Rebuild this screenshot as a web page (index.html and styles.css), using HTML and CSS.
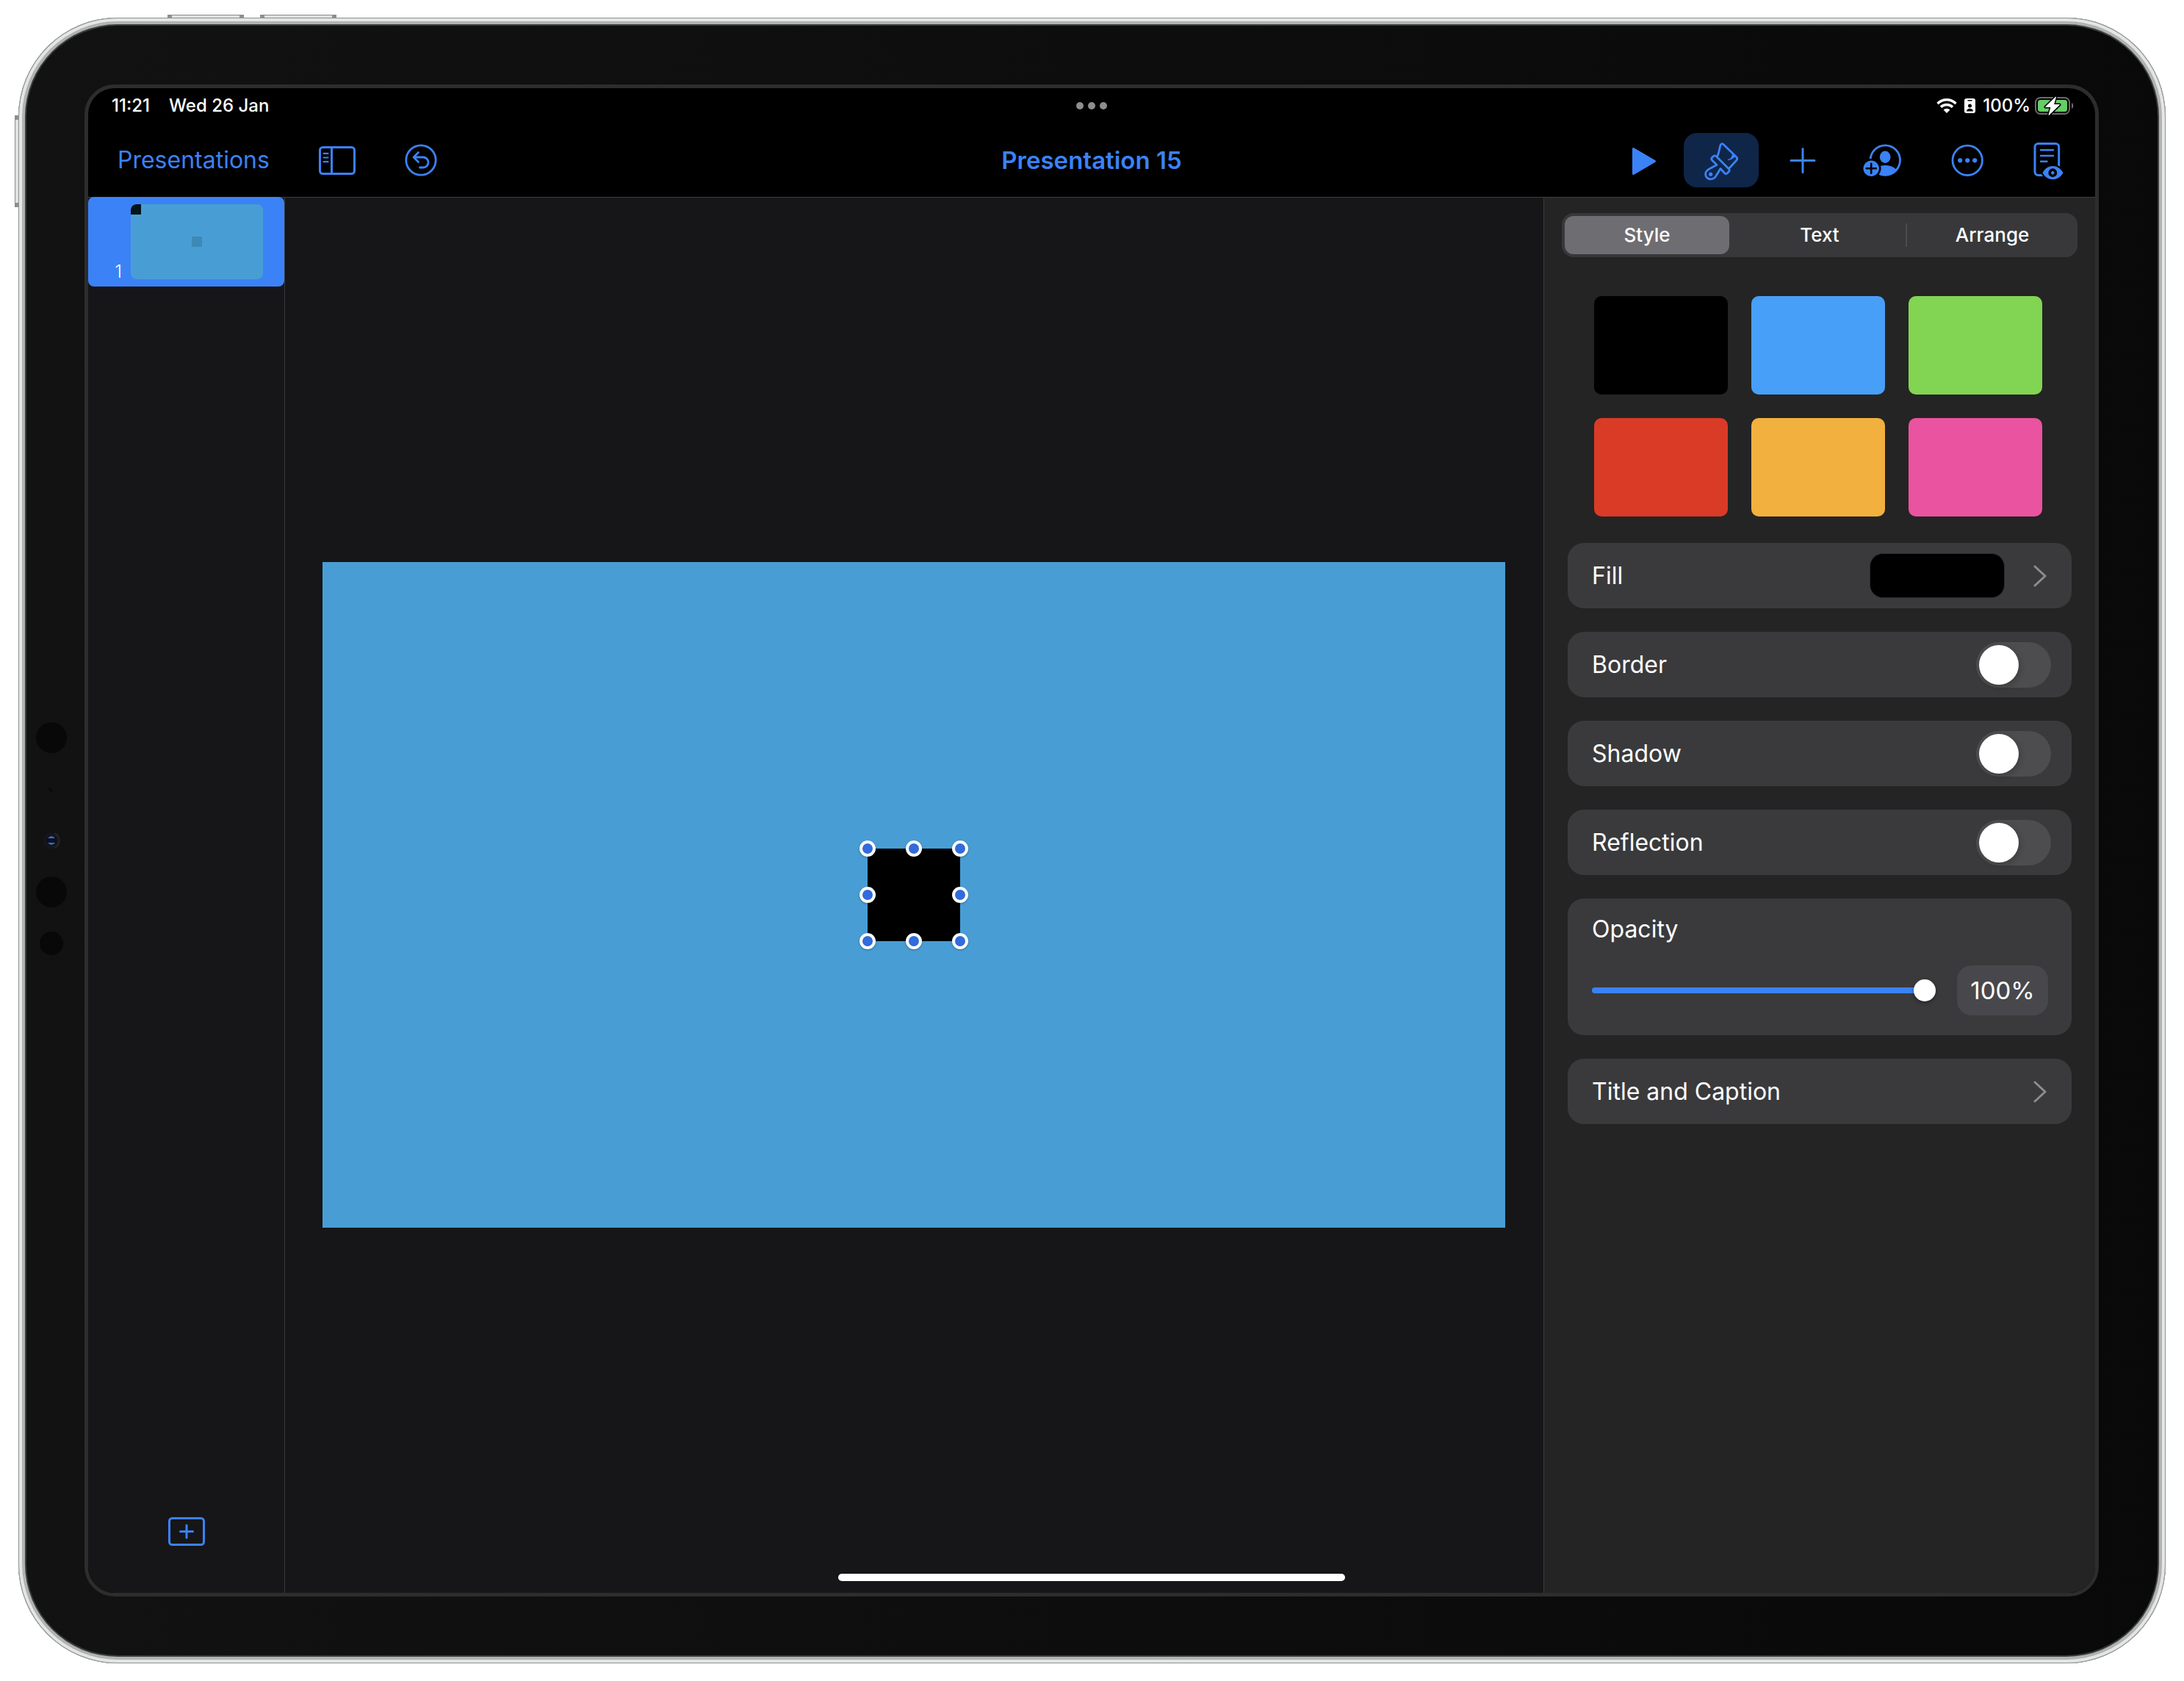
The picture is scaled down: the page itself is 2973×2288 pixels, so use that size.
FILE: index.html
```html
<!DOCTYPE html>
<html lang="en">
<head>
<meta charset="utf-8">
<meta name="viewport" content="width=device-width, initial-scale=1">
<title>Presentation 15</title>
<link rel="stylesheet" href="styles.css">
</head>
<body>
<div class="device">
  <span class="hw hw-top hw-up"></span>
  <span class="hw hw-top hw-down"></span>
  <span class="hw hw-side"></span>
  <div class="sensors">
    <span class="slot"><i class="sensor large"></i></span>
    <span class="slot"><i class="sensor mic"></i></span>
    <span class="slot">
      <svg width="26" height="26" viewBox="0 0 26 26"><circle cx="13" cy="13" r="11" fill="#15161a"/><path d="M17 3a11 11 0 0 1 0 20" fill="none" stroke="#222" stroke-width="3"/><circle cx="13" cy="13" r="7" fill="#0c1024"/><path d="M8 10q5-6 10 0zM8 16q5 6 10 0z" fill="#3c6cb4"/></svg>
    </span>
    <span class="slot"><i class="sensor large"></i></span>
    <span class="slot"><i class="sensor small"></i></span>
  </div>

  <div class="screen">
    <div class="status">
      <div class="status-left"><span>11:21</span><span>Wed 26 Jan</span></div>
      <div class="dots"><i></i><i></i><i></i></div>
      <div class="status-right">
        <svg class="wifi" width="28" height="20" viewBox="0 0 28 20"><g fill="none" stroke="#fff" stroke-width="3.4"><path d="M1.5 7a17.6 17.6 0 0 1 25 0"/><path d="M6 11.8a11.4 11.4 0 0 1 16 0"/></g><path d="M14 20l-4.400-4.600a6.400 6.400 0 0 1 8.800 0z" fill="#fff"/></svg>
        <svg class="badge" width="15" height="20" viewBox="0 0 15 20"><rect width="15" height="20" rx="3" fill="#fff"/><path d="M4.500 2.700h6" stroke="#000" stroke-width="1.400"/><circle cx="7.500" cy="10" r="2.500"/><path d="M3 17.500c0-5 9-5 9 0z"/></svg>
        <span>100%</span>
        <svg class="battery" width="54" height="26" viewBox="0 0 54 26"><rect x="1" y="2" width="46" height="22" rx="6.500" fill="none" stroke="#6b6b6d" stroke-width="2"/><rect x="4" y="5" width="40" height="16" rx="3.500" fill="#65cd66"/><path d="M50 9c3 1 3 7 0 8z" fill="#6b6b6d"/><path d="M28.500 1L14.500 14.500h7.500L19 25.500 33.500 11.500h-8z" fill="#000" stroke="#000" stroke-width="4" stroke-linejoin="round"/><path d="M28.500 1L14.500 14.500h7.500L19 25.500 33.500 11.500h-8z" fill="#fff" stroke="#fff" stroke-width="1" stroke-linejoin="round"/></svg>
      </div>
    </div>

    <header class="toolbar">
      <div class="tools-left">
        <a class="back" href="#">Presentations</a>
        <button class="icon-btn" type="button" aria-label="View options">
          <svg width="50" height="39" viewBox="0 0 50 39" fill="none" stroke="currentColor" stroke-width="3"><rect x="1.500" y="1.500" width="47" height="36" rx="4"/><path d="M17.500 2v35"/><path d="M6.500 9.800h6M6.500 15.500h6M6.500 21.200h6" stroke-width="2.200" stroke-linecap="round"/></svg>
        </button>
        <button class="icon-btn" type="button" aria-label="Undo">
          <svg width="44" height="44" viewBox="0 0 44 44" fill="none" stroke="currentColor" stroke-width="2.800" stroke-linecap="round" stroke-linejoin="round"><circle cx="22" cy="22" r="20.200"/><path d="M18.500 11.500L12 18l6.500 6.500M12.500 18H25a7 7 0 0 1 0 14h-4.500"/></svg>
        </button>
      </div>
      <h1 class="title">Presentation 15</h1>
      <div class="tools-right">
        <button class="icon-btn" type="button" aria-label="Play">
          <svg width="64" height="64" viewBox="0 0 64 64"><path d="M17.500 16.500v34L46.500 33.500z" fill="currentColor" stroke="currentColor" stroke-width="3" stroke-linejoin="round"/></svg>
        </button>
        <button class="icon-btn format" type="button" aria-label="Format" aria-pressed="true">
          <svg width="64" height="64" viewBox="0 0 64 64" fill="none" stroke="currentColor" stroke-width="2.800" stroke-linejoin="round"><path d="M26 38.500L19.500 32Q18 30 19.500 28.500L21.500 26.500Q23.500 25 25.500 27L42.500 44Q44 46 42.500 47.500L40 50Q38 51.500 36.500 49.500L31 43.500C29 47 27 50 25.500 52.500C23 58 17 59 13.500 56.500C10 54 9.500 48.500 13.500 45.500C17 43 21.500 41 26 38.500Z"/><path d="M26.500 27C29.500 22 29.500 15 31 11.500Q32.500 8.500 35 10.500L53 28Q54.500 30 53 32L42.500 43.500"/><path d="M47.500 22.500C47.500 27 45 31 41 31.500C45 31.500 49 29 51.500 26.500Z" fill="currentColor" stroke-width="1"/><circle cx="17.700" cy="51.200" r="2.600" fill="currentColor" stroke="none"/></svg>
        </button>
        <button class="icon-btn wide" type="button" aria-label="Insert">
          <svg width="64" height="64" viewBox="0 0 64 64" fill="none" stroke="currentColor" stroke-width="3" stroke-linecap="round"><path d="M32 16.500v32M16 32.500h32"/></svg>
        </button>
        <button class="icon-btn wide" type="button" aria-label="Collaborate">
          <svg width="64" height="64" viewBox="0 0 64 64"><clipPath id="disc"><circle cx="33.300" cy="32" r="21.500"/></clipPath><circle cx="33.300" cy="32" r="20.200" fill="none" stroke="currentColor" stroke-width="2.800"/><ellipse cx="33.200" cy="27.700" rx="7.300" ry="8.200" fill="currentColor"/><ellipse cx="33.300" cy="53" rx="18.500" ry="14" fill="currentColor" clip-path="url(#disc)"/><circle cx="14.200" cy="43.300" r="13.300"/><circle cx="14.200" cy="43.300" r="10.700" fill="currentColor"/><path d="M14.200 36.800v13M7.700 43.300h13" stroke="#000" stroke-width="2.600" stroke-linecap="round"/></svg>
        </button>
        <button class="icon-btn wide" type="button" aria-label="More">
          <svg width="64" height="64" viewBox="0 0 64 64"><circle cx="34.200" cy="32.300" r="20.200" fill="none" stroke="currentColor" stroke-width="2.800"/><g fill="currentColor"><circle cx="24.200" cy="32.300" r="3.100"/><circle cx="34.200" cy="32.300" r="3.100"/><circle cx="44.200" cy="32.300" r="3.100"/></g></svg>
        </button>
        <button class="icon-btn wide" type="button" aria-label="Reading view">
          <svg width="64" height="64" viewBox="0 0 64 64" fill="none" stroke="currentColor"><rect x="15" y="9.500" width="32.700" height="43" rx="4.500" stroke-width="3"/><path d="M23 18.300h17M23 26h17M23 33.700h8.500" stroke-width="2.400" stroke-linecap="round"/><path d="M25.500 49.200C32 37 46.500 37 53.500 49.200C46.500 61.200 32 61.200 25.500 49.200Z" fill="currentColor" stroke="#000" stroke-width="4.500" paint-order="stroke"/><circle cx="39.300" cy="49.200" r="4.100" fill="currentColor" stroke="#000" stroke-width="3.600"/></svg>
        </button>
      </div>
    </header>

    <main class="workspace">
      <nav class="navigator" aria-label="Slides">
        <button class="slide-item" type="button" aria-label="Slide 1">
          <span class="slide-number">1</span>
          <svg class="thumb" width="180" height="102" viewBox="0 0 180 102"><rect width="180" height="102" fill="#489ed4"/><rect width="14" height="14" fill="#04141a"/><rect x="83" y="44" width="14" height="14" fill="#3d89b6"/></svg>
        </button>
        <button class="icon-btn add-slide" type="button" aria-label="Add slide">
          <svg width="50" height="39" viewBox="0 0 50 39" fill="none" stroke="currentColor" stroke-width="3" stroke-linecap="round"><rect x="1.500" y="1.500" width="47" height="36" rx="4"/><path d="M25 11v17M16.500 19.500h17"/></svg>
        </button>
      </nav>

      <section class="canvas" aria-label="Slide">
        <div class="slide">
          <div class="shape">
            <i class="handle nw"></i><i class="handle n"></i><i class="handle ne"></i>
            <i class="handle w"></i><i class="handle e"></i>
            <i class="handle sw"></i><i class="handle s"></i><i class="handle se"></i>
          </div>
        </div>
      </section>

      <aside class="inspector">
        <div class="tabs" role="tablist">
          <button type="button" role="tab" aria-selected="true">Style</button>
          <button type="button" role="tab" aria-selected="false">Text</button>
          <button type="button" role="tab" aria-selected="false" class="divided">Arrange</button>
        </div>
        <div class="presets">
          <button type="button" class="preset black" aria-label="Black"></button>
          <button type="button" class="preset blue" aria-label="Blue"></button>
          <button type="button" class="preset green" aria-label="Green"></button>
          <button type="button" class="preset red" aria-label="Red"></button>
          <button type="button" class="preset yellow" aria-label="Yellow"></button>
          <button type="button" class="preset pink" aria-label="Pink"></button>
        </div>
        <div class="cards">
          <button class="card link" type="button"><span class="label">Fill</span><span class="fill-swatch"></span><svg width="18" height="30" viewBox="0 0 18 30" fill="none" stroke="#8d8d91" stroke-width="3" stroke-linecap="round" stroke-linejoin="round"><path d="M2 2l14 13L2 28"/></svg></button>
          <div class="card"><label class="label" for="border">Border</label><input class="switch" type="checkbox" role="switch" id="border"></div>
          <div class="card"><label class="label" for="shadow">Shadow</label><input class="switch" type="checkbox" role="switch" id="shadow"></div>
          <div class="card"><label class="label" for="reflection">Reflection</label><input class="switch" type="checkbox" role="switch" id="reflection"></div>
          <div class="card opacity">
            <label class="label" for="opacity">Opacity</label>
            <div class="opacity-row">
              <input class="slider" type="range" id="opacity" min="0" max="100" value="100">
              <input class="amount" type="text" value="100%" aria-label="Opacity value">
            </div>
          </div>
          <button class="card link" type="button"><span class="label">Title and Caption</span><svg width="18" height="30" viewBox="0 0 18 30" fill="none" stroke="#8d8d91" stroke-width="3" stroke-linecap="round" stroke-linejoin="round"><path d="M2 2l14 13L2 28"/></svg></button>
        </div>
      </aside>
    </main>
    <span class="home-indicator"></span>
  </div>
</div>
</body>
</html>
```
FILE: styles.css
```css
:root {
  --accent: #3b82f7;
  --line: #414143;
  --card: #3a3a3c;
}

* { box-sizing: border-box; }

body {
  margin: 0;
  min-height: 100vh;
  padding: 24px 25px;
  display: flex;
  background: #fff;
  color: #fff;
  font-family: Inter, "Liberation Sans", sans-serif;
  font-size: 32px;
  line-height: 44px;
}

button, input { font: inherit; color: inherit; border: 0; margin: 0; padding: 0; background: none; }
svg { display: block; flex: none; }

/* Hardware */
.device {
  position: relative;
  flex: 1;
  min-width: 0;
  display: flex;
  padding: 91px 91px 91px 0;
  border-radius: 135px;
  background: linear-gradient(to right, #121212, #090909);
  box-shadow: inset 0 0 0 1px #8f9291, inset 0 0 0 5px #e4e6e4, inset 0 0 0 9px #b0b3b1, inset 0 0 0 11px #3a3c3c;
}
.hw { position: absolute; background: #dfe2e0; border: 1px solid #8b8e8c; }
.hw-top { top: -4px; width: 104px; height: 4px; border-bottom: 0; border-left-width: 6px; border-right-width: 6px; }
.hw-up { left: 203px; }
.hw-down { left: 329px; }
.hw-side { left: -5px; top: 133px; width: 5px; height: 125px; border-right: 0; border-top-width: 6px; border-bottom-width: 6px; }

.sensors { width: 90px; flex: none; display: flex; flex-direction: column; align-items: center; justify-content: center; }
.slot { height: 70px; display: flex; align-items: center; }
.sensor { border-radius: 50%; background: #080808; }
.large { width: 42px; height: 42px; }
.small { width: 32px; height: 32px; }
.mic { width: 8px; height: 8px; background: repeating-linear-gradient(45deg, #060606 0 1px, #181818 1px 2px); }

.screen {
  position: relative;
  flex: 1;
  min-width: 0;
  display: flex;
  flex-direction: column;
  overflow: hidden;
  border: 5px solid #2d2d2d;
  border-radius: 41px;
  background: #000;
}

/* Status bar */
.status {
  height: 48px;
  display: grid;
  grid-template-columns: 1fr auto 1fr;
  align-items: center;
  padding: 0 28px;
  font-size: 24px;
  line-height: 32px;
  font-weight: 500;
}
.status-left { display: flex; gap: 26px; padding-left: 4px; }
.dots { display: flex; gap: 6px; }
.dots i { width: 10px; height: 10px; border-radius: 50%; background: #8e8e8f; }
.status-right { display: flex; align-items: center; justify-content: flex-end; }
.badge { margin: 0 10px; }
.battery { margin-left: 6px; }

/* Toolbar */
.toolbar { height: 100px; display: grid; grid-template-columns: 1fr auto 1fr; align-items: center; color: var(--accent); }
.tools-left, .tools-right { display: flex; align-items: center; }
.tools-left { padding-left: 40px; gap: 67px; }
.tools-right { justify-content: flex-end; padding-right: 10px; }
.back { color: inherit; text-decoration: none; }
.title { margin: 0; font-size: 33px; line-height: 44px; font-weight: 600; }
.icon-btn { display: flex; align-items: center; justify-content: center; color: var(--accent); }
.wide { width: 111px; }
.format { width: 102px; height: 74px; margin: 0 4px 0 22px; border-radius: 18px; background: #0f2649; }

/* Workspace */
.workspace { flex: 1; display: flex; background: #161618; }
.workspace > * { box-shadow: inset 0 1px var(--line); }
.navigator { width: 268px; flex: none; display: flex; flex-direction: column; justify-content: space-between; border-right: 1px solid #39393b; }
.slide-item { height: 122px; display: flex; align-items: center; justify-content: flex-end; gap: 12px; padding-right: 29px; border-radius: 8px; background: var(--accent); }
.slide-number { align-self: flex-end; font-size: 24px; line-height: 32px; font-weight: 300; padding-bottom: 4px; }
.thumb { border-radius: 8px; }
.add-slide { align-self: center; margin-bottom: 64px; }

.canvas { flex: 1; min-width: 0; display: flex; align-items: center; padding: 0 52px 0 51px; }
.slide { flex: 1; aspect-ratio: 16 / 9; display: flex; align-items: center; justify-content: center; background: #489ed4; }
.shape { position: relative; width: 126px; height: 126px; background: #000; }
.handle { position: absolute; width: 22px; height: 22px; margin: -11px; border: 4px solid #fff; border-radius: 50%; background: #316bdc; box-shadow: 0 1px 3px rgba(0, 0, 0, .3); }
.nw, .n, .ne { top: 0; }
.w, .e { top: 50%; }
.sw, .s, .se { top: 100%; }
.nw, .w, .sw { left: 0; }
.n, .s { left: 50%; }
.ne, .e, .se { left: 100%; }

/* Inspector */
.inspector { width: 751px; flex: none; padding: 22px 24px; border-left: 1px solid #39393b; background: #242424; }
.tabs { height: 60px; display: grid; grid-template-columns: repeat(3, 1fr); gap: 11px; padding: 4px; border-radius: 16px; background: #38383a; }
.tabs button { position: relative; border-radius: 12px; font-size: 26px; line-height: 32px; font-weight: 500; }
.tabs button[aria-selected="true"] { background: #6e6d72; }
.divided::before { content: ""; position: absolute; left: -6px; top: 10px; bottom: 10px; width: 2px; background: #4c4c4f; }

.presets { display: grid; grid-template-columns: repeat(3, 1fr); gap: 32px; padding: 53px 48px 36px 44px; }
.preset { height: 134px; border-radius: 10px; }
.black { background: #000; }
.blue { background: #489ff8; }
.green { background: #82d553; }
.red { background: #da3b26; }
.yellow { background: #f2b13e; }
.pink { background: #ea539f; }

.cards { display: flex; flex-direction: column; gap: 32px; padding: 0 8px; }
.card { min-height: 89px; display: flex; align-items: center; padding: 0 28px 0 33px; border-radius: 22px; background: var(--card); text-align: left; }
.link { padding-right: 34px; }
.label { flex: 1; }
.fill-swatch { width: 184px; height: 61px; margin-right: 39px; border: 1px solid #2c2c2e; border-radius: 18px; background: #000; }

.switch { appearance: none; width: 102px; height: 62px; padding: 4px; border-radius: 31px; background: #4d4d4f; }
.switch::before { content: ""; display: block; width: 54px; height: 54px; border-radius: 50%; background: #fff; box-shadow: 2px 3px 8px rgba(0, 0, 0, .2); }
.switch:checked { background: #65cd66; }
.switch:checked::before { margin-left: auto; }

.opacity { flex-direction: column; align-items: stretch; gap: 27px; padding: 20px 32px 27px 33px; }
.opacity-row { display: flex; align-items: center; gap: 29px; }
.slider { appearance: none; flex: 1; min-width: 0; height: 30px; }
.slider::-webkit-slider-runnable-track { height: 8px; border-radius: 4px; background: var(--accent); }
.slider::-webkit-slider-thumb { appearance: none; width: 30px; height: 30px; margin-top: -11px; border-radius: 50%; background: #fff; box-shadow: 0 2px 5px rgba(0, 0, 0, .4); }
.amount { width: 124px; height: 68px; border-radius: 20px; background: #48484c; font-size: 33px; text-align: center; }

.home-indicator { position: absolute; left: 50%; bottom: 16px; width: 690px; height: 10px; margin-left: -345px; border-radius: 5px; background: #fff; }
```
